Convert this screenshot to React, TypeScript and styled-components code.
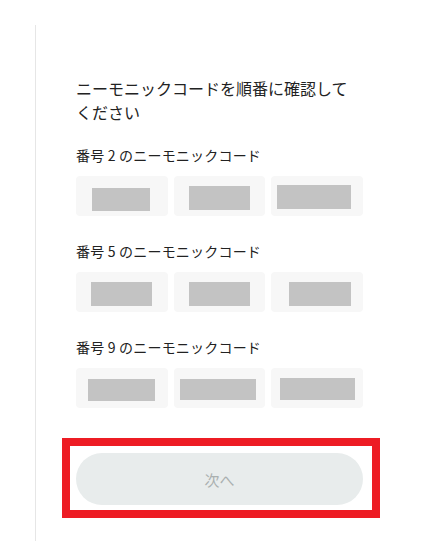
import styled, { createGlobalStyle } from "styled-components"

const GlobalStyle = createGlobalStyle`
  html, body {
    margin: 0;
    padding: 0;
    background: #fff;
  }
  body {
    font-family: "Noto Sans CJK JP", "Noto Sans", sans-serif;
    color: #222;
  }
`

const Page = styled.div`
  padding: 25px 0 0 35px;
`

const Panel = styled.div`
  border-left: 1px solid #e6e6e6;
  min-height: 516px;
  box-sizing: border-box;
  padding: 51px 0 0 40px;
`

const Content = styled.div`
  width: 287px;
`

const Title = styled.div`
  font-size: 16px;
  line-height: 24px;
  margin: 0 0 21px;
`

const Section = styled.div`
  & + & {
    margin-top: 25px;
  }
`

const Label = styled.div`
  font-size: 14px;
  line-height: 20px;
  letter-spacing: 0.2px;
  margin-bottom: 11px;
`

const Row = styled.div`
  display: grid;
  grid-template-columns: repeat(3, 1fr);
  gap: 6px;
`

const Cell = styled.div`
  height: 40px;
  background: #f7f7f7;
  border-radius: 4px;
  display: flex;
  align-items: center;
  justify-content: center;
`

const Mask = styled.div<{ $w: number; $h: number; $dx: number; $dy: number }>`
  width: ${(p) => p.$w}px;
  height: ${(p) => p.$h}px;
  background: #c3c3c3;
  transform: translate(${(p) => p.$dx}px, ${(p) => p.$dy}px);
`

const ButtonWrap = styled.div`
  position: relative;
  margin-top: 45px;
`

const NextButton = styled.button`
  display: block;
  width: 100%;
  height: 52px;
  border: none;
  border-radius: 26px;
  background: #e8ecec;
  color: #aab0b0;
  font-family: "Noto Sans CJK JP", "Noto Sans", sans-serif;
  font-size: 15px;
  cursor: default;
`

const Highlight = styled.div`
  position: absolute;
  left: -14px;
  top: -15px;
  width: 318px;
  height: 80px;
  box-sizing: border-box;
  border: 8px solid #ed1c24;
  pointer-events: none;
`

const sections = [
  {
    no: 2,
    masks: [
      { w: 58, h: 23, dx: -1, dy: 3 },
      { w: 61, h: 24, dx: 0, dy: 2 },
      { w: 74, h: 24, dx: -3, dy: 1 },
    ],
  },
  {
    no: 5,
    masks: [
      { w: 61, h: 24, dx: 0, dy: 2 },
      { w: 61, h: 24, dx: 0, dy: 2 },
      { w: 62, h: 24, dx: 3, dy: 2 },
    ],
  },
  {
    no: 9,
    masks: [
      { w: 67, h: 22, dx: 0, dy: 2 },
      { w: 76, h: 21, dx: -1, dy: 1 },
      { w: 75, h: 22, dx: 0, dy: 1 },
    ],
  },
]

const App = () => {
  return (
    <>
      <GlobalStyle />
      <Page>
        <Panel>
          <Content>
            <Title>ニーモニックコードを順番に確認してください</Title>
            {sections.map((s) => (
              <Section key={s.no}>
                <Label>番号 {s.no} のニーモニックコード</Label>
                <Row>
                  {s.masks.map((m, i) => (
                    <Cell key={i}>
                      <Mask $w={m.w} $h={m.h} $dx={m.dx} $dy={m.dy} />
                    </Cell>
                  ))}
                </Row>
              </Section>
            ))}
            <ButtonWrap>
              <NextButton disabled>次へ</NextButton>
              <Highlight />
            </ButtonWrap>
          </Content>
        </Panel>
      </Page>
    </>
  )
}

export default App
